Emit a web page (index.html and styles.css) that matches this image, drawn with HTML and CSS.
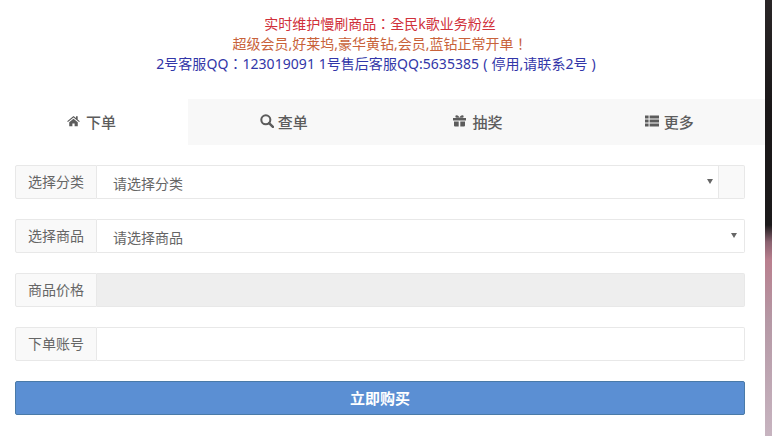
FILE: index.html
```html
<!DOCTYPE html>
<html lang="zh-CN">
<head>
<meta charset="utf-8">
<title>下单</title>
<link rel="stylesheet" href="styles.css">
</head>
<body>
<div class="page">
  <main class="panel">
    <div class="notice" lang="zh-TW">
      <div class="red">实时维护慢刷商品：全民k歌业务粉丝</div>
      <div class="orange">超级会员,好莱坞,豪华黄钻,会员,蓝钻正常开单！</div>
      <div class="blue">2号客服QQ：123019091 1号售后客服QQ:5635385<span class="paren">(</span>停用,请联系2号<span class="paren paren-end">)</span></div>
    </div>
    <nav class="tabs">
      <a class="tab active"><svg class="ico" viewBox="0 0 14 12"><path d="M7 0.6 0.2 6.2l.8.9L7 2.3l6 4.8.8-.9-2.3-1.9V1h-1.8v1.8zM2.4 7.4V11.6h3.4V8.6h2.4v3h3.4V7.4L7 3.6z"/></svg>下单</a>
      <a class="tab"><svg class="ico ico-search" viewBox="0 0 13 13"><circle cx="5.4" cy="5.4" r="4.2" fill="none" stroke="currentColor" stroke-width="1.9"/><path d="M8.4 8.4 12 12" stroke="currentColor" stroke-width="2.3" stroke-linecap="round"/></svg>查单</a>
      <a class="tab tab-gift"><svg class="ico" viewBox="0 0 13 12"><path d="M0 3h13v2.6H0zM1 6.4h4.7v5.2H2a1 1 0 0 1-1-1zM7.3 6.4H12v4.2a1 1 0 0 1-1 1H7.3zM5.7 3h1.6v2.6H5.7zM3.6.3c1.4 0 2.4 1.2 2.9 2.5H3.6a1.25 1.25 0 0 1 0-2.5zM9.4.3c-1.4 0-2.4 1.2-2.9 2.5h2.9a1.25 1.25 0 0 0 0-2.5z"/></svg>抽奖</a>
      <a class="tab"><svg class="ico ico-list" viewBox="0 0 14 12"><path d="M0 .5h3.6v3H0zM4.6.5H14v3H4.6zM0 4.5h3.6v3H0zM4.6 4.5H14v3H4.6zM0 8.5h3.6v3H0zM4.6 8.5H14v3H4.6z"/></svg>更多</a>
    </nav>
    <form class="form">
      <div class="group">
        <span class="addon">选择分类</span>
        <div class="control select"><span>请选择分类</span><i class="caret"></i></div>
        <span class="addon addon-end"></span>
      </div>
      <div class="group">
        <span class="addon">选择商品</span>
        <div class="control select"><span>请选择商品</span><i class="caret"></i></div>
      </div>
      <div class="group">
        <span class="addon">商品价格</span>
        <div class="control disabled"></div>
      </div>
      <div class="group">
        <span class="addon">下单账号</span>
        <div class="control"></div>
      </div>
      <button class="buy" type="button">立即购买</button>
    </form>
  </main>
  <div class="strip"></div>
</div>
</body>
</html>
```
FILE: styles.css
```css
* { box-sizing: border-box; }
html, body { margin: 0; height: 100%; background: #fff; overflow: hidden; }
body { font-family: "Liberation Sans", "Noto Sans CJK SC", sans-serif; font-size: 14px; color: #666; }
.page { display: flex; width: 772px; height: 436px; }
.panel { width: 765px; flex: none; }
.strip { flex: 1; background: linear-gradient(180deg, #2a2627 0, #1a1718 110px, #1c1a1b 225px, #8a6270 242px, #b97f8e 260px, #b598a5 320px, #c7b4c0 436px); }

.notice { padding-top: 14px; padding-right: 5px; height: 99px; text-align: center; line-height: 20px; font-size: 14px; font-family: "Noto Sans", "Noto Sans CJK TC", sans-serif; }
.red { color: #d0303a; }
.orange { color: #c8623a; }
.blue { color: #3236a8; letter-spacing: .05px; }
.paren { margin: 0 4px; }
.paren-end { margin-right: 8px; }

.tabs { display: flex; height: 46px; background: #f8f8f8; }
.tab { flex: 1 1 0; display: flex; align-items: center; justify-content: center; padding-bottom: 2px; font-size: 15px; font-weight: 500; color: #5c5c5c; }
.tab.active { flex: 0 0 188px; background: #fff; padding-right: 5px; }
.tab-gift { padding-left: 3px; }
.ico { width: 13px; height: 12px; margin-right: 6px; fill: currentColor; }
.ico-search { width: 14px; height: 14px; margin-right: 4px; }
.ico-list { width: 14px; margin-right: 5px; }

.form { padding: 20px 20px 0 15px; display: flex; flex-direction: column; gap: 20px; }
.group { display: flex; height: 34px; }
.addon { flex: 0 0 82px; display: flex; align-items: center; justify-content: center; background: #f9f9f9; border: 1px solid #e8e8e8; border-radius: 2px 0 0 2px; color: #666; padding-bottom: 2px; }
.addon-end { flex: 0 0 26px; border-left: 0; border-radius: 0 2px 2px 0; }
.control { flex: 1; border: 1px solid #e8e8e8; border-left: 0; border-radius: 0 2px 2px 0; background: #fff; }
.group .select:not(:last-child) { border-right: 1px solid #e8e8e8; border-radius: 0; padding-right: 5px; }
.select { display: flex; align-items: center; justify-content: space-between; padding: 2px 7px 0 16px; color: #666; }
.caret { width: 0; height: 0; border-left: 3px solid transparent; border-right: 3px solid transparent; border-top: 5px solid #666; margin-bottom: 4px; }
.disabled { background: #eee; }
.buy { height: 34px; padding: 0 0 2px; border: 1px solid #4a7aa8; border-radius: 2px; background: #5b8fd3; color: #fff; font: 700 15px "Liberation Sans", "Noto Sans CJK SC", sans-serif; }
```
